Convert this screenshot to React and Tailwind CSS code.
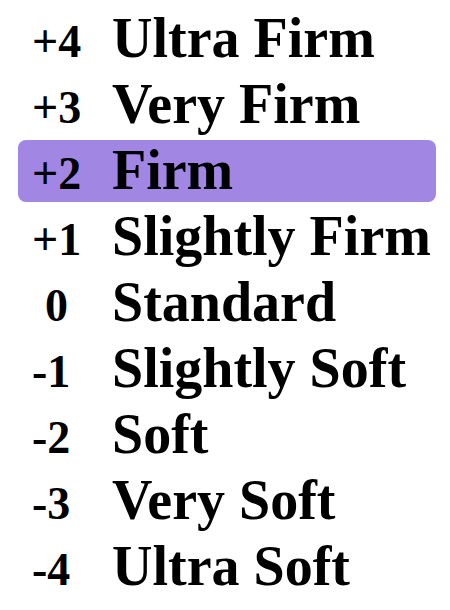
import React, { useState } from 'react';

const levels = [
  { value: '+4', label: 'Ultra Firm' },
  { value: '+3', label: 'Very Firm' },
  { value: '+2', label: 'Firm' },
  { value: '+1', label: 'Slightly Firm' },
  { value: '0', label: 'Standard' },
  { value: '-1', label: 'Slightly Soft' },
  { value: '-2', label: 'Soft' },
  { value: '-3', label: 'Very Soft' },
  { value: '-4', label: 'Ultra Soft' },
];

function FirmnessPicker() {
  const [selected, setSelected] = useState('+2');

  return (
    <div className="w-[450px] h-[610px] bg-white pt-[8px] flex flex-col gap-[4px] font-['Liberation_Serif',serif] text-black">
      {levels.map(level => (
        <button
          key={level.value}
          onClick={() => setSelected(level.value)}
          className={
            'ml-[18px] w-[418px] h-[62px] shrink-0 rounded-lg pl-[14px] flex items-baseline text-left ' +
            (selected === level.value ? 'bg-[#a186e4]' : 'bg-transparent')
          }
        >
          <span
            className={
              'w-[80px] shrink-0 text-[46px] font-bold leading-[60px] ' +
              (level.value === '0' ? 'pl-[13px]' : '')
            }
          >
            {level.value}
          </span>
          <span className="text-[56px] font-bold leading-[60px] whitespace-nowrap">{level.label}</span>
        </button>
      ))}
    </div>
  );
}

export default function App() {
  return <FirmnessPicker />;
}
